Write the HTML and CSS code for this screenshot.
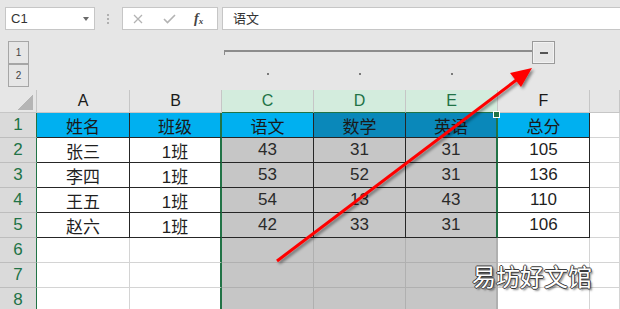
FILE: index.html
```html
<!DOCTYPE html>
<html>
	<head>
		<meta charset="UTF-8">
		<title>sheet</title>
		<link rel="stylesheet" href="styles.css">
	</head>
	<body>
		<div class="topbar">
			<div class="namebox"><span>C1</span><span class="caret"></span></div>
			<div class="grip"></div>
			<div class="fxbtns">
				<svg class="ico-x" width="10" height="10" viewBox="0 0 10 10"><path d="M1 1L9 9M9 1L1 9" stroke="#b3b3b3" stroke-width="1.3" fill="none"/></svg>
				<svg class="ico-ok" width="13" height="10" viewBox="0 0 13 10"><path d="M1 5L4.5 8.5L12 1" stroke="#b3b3b3" stroke-width="1.6" fill="none"/></svg>
				<span class="fx"><i>f</i><sub>x</sub></span>
			</div>
			<div class="formula">语文</div>
		</div>

		<div class="outline">
			<div class="levels">
				<div class="lvl">1</div>
				<div class="lvl">2</div>
			</div>
			<div class="group">
				<div class="bracket">
					<div class="line"></div>
					<div class="minus"><span></span></div>
				</div>
				<div class="dots"><i></i><i></i><i></i></div>
			</div>
		</div>

		<div class="sheet">
			<!-- 列标题 -->
			<div class="corner"></div>
			<div class="ch">A</div>
			<div class="ch">B</div>
			<div class="ch sel">C</div>
			<div class="ch sel">D</div>
			<div class="ch sel">E</div>
			<div class="ch">F</div>
			<div class="ch"></div>

			<!-- 表头 -->
			<div class="rh">1</div>
			<div class="t hd">姓名</div>
			<div class="t hd sl">班级</div>
			<div class="t hd">语文</div>
			<div class="t hd dk">数学</div>
			<div class="t hd dk sr handle">英语</div>
			<div class="t hd">总分</div>
			<div></div>

			<div class="rh">2</div>
			<div class="t">张三</div>
			<div class="t sl">1班</div>
			<div class="t g">43</div>
			<div class="t g">31</div>
			<div class="t g sr">31</div>
			<div class="t">105</div>
			<div></div>

			<div class="rh">3</div>
			<div class="t">李四</div>
			<div class="t sl">1班</div>
			<div class="t g">53</div>
			<div class="t g">52</div>
			<div class="t g sr">31</div>
			<div class="t">136</div>
			<div></div>

			<div class="rh">4</div>
			<div class="t">王五</div>
			<div class="t sl">1班</div>
			<div class="t g">54</div>
			<div class="t g">13</div>
			<div class="t g sr">43</div>
			<div class="t">110</div>
			<div></div>

			<div class="rh">5</div>
			<div class="t">赵六</div>
			<div class="t sl">1班</div>
			<div class="t g">42</div>
			<div class="t g">33</div>
			<div class="t g sr">31</div>
			<div class="t">106</div>
			<div></div>

			<div class="rh">6</div>
			<div></div>
			<div class="sl"></div>
			<div class="g e"></div>
			<div class="g e"></div>
			<div class="g e sr"></div>
			<div></div>
			<div></div>

			<div class="rh">7</div>
			<div></div>
			<div class="sl"></div>
			<div class="g e"></div>
			<div class="g e"></div>
			<div class="g e sr"></div>
			<div></div>
			<div></div>

			<div class="rh">8</div>
			<div></div>
			<div class="sl"></div>
			<div class="g e"></div>
			<div class="g e"></div>
			<div class="g e sr"></div>
			<div></div>
			<div></div>
		</div>

		<!-- 红色箭头 -->
		<svg class="arrow" width="620" height="309" viewBox="0 0 620 309">
			<defs>
				<filter id="sh" x="-10%" y="-10%" width="130%" height="130%">
					<feDropShadow dx="2" dy="2" stdDeviation="1.5" flood-color="#000" flood-opacity="0.45"/>
				</filter>
			</defs>
			<g filter="url(#sh)">
				<line x1="277" y1="261" x2="519" y2="78" stroke="#f00" stroke-width="3"/>
				<polygon points="532,68 521,87 510,73" fill="#f00"/>
			</g>
		</svg>

		<div class="watermark">易坊好文馆</div>
	</body>
</html>
```

FILE: styles.css
```css
*{
	margin: 0;
	padding: 0;
}
body{
	width: 620px;
	height: 309px;
	overflow: hidden;
	position: relative;
	background: #e6e6e6;
	font-family: "Liberation Sans", "Noto Sans CJK SC", sans-serif;
	color: #222;
}

/* 编辑栏 */
.topbar{
	display: flex;
	align-items: center;
	height: 37px;
}
.namebox{
	width: 90px;
	height: 23px;
	margin-left: 5px;
	box-sizing: border-box;
	border: 1px solid #c6c6c6;
	background: #fff;
	display: flex;
	align-items: center;
	justify-content: space-between;
	padding: 0 5px 0 5px;
	font-size: 13px;
	color: #333;
}
.caret{
	width: 0;
	height: 0;
	border-left: 3px solid transparent;
	border-right: 3px solid transparent;
	border-top: 4px solid #6a6a6a;
}
.grip{
	width: 2px;
	height: 10px;
	margin-left: 12px;
	background: repeating-linear-gradient(to bottom, #b0b0b0 0, #b0b0b0 2px, transparent 2px, transparent 4px);
}
.fxbtns{
	width: 96px;
	height: 23px;
	margin-left: 13px;
	box-sizing: border-box;
	border: 1px solid #c6c6c6;
	background: #fff;
	display: flex;
	align-items: center;
}
.ico-x{
	margin-left: 10px;
}
.ico-ok{
	margin-left: 20px;
}
.fx{
	margin-left: 18px;
	font-family: "Liberation Serif", serif;
	font-size: 14px;
	font-weight: bold;
	color: #444;
	font-style: italic;
	line-height: 1;
}
.fx sub{
	font-size: 9px;
	vertical-align: -1px;
}
.formula{
	flex: 1;
	height: 23px;
	margin-left: 4px;
	box-sizing: border-box;
	border: 1px solid #c6c6c6;
	border-right: none;
	background: #fff;
	padding-left: 10px;
	font-size: 13px;
	line-height: 21px;
	color: #333;
}

/* 分级显示 */
.outline{
	display: flex;
	height: 53px;
}
.levels{
	margin-left: 8px;
	padding-top: 4px;
}
.lvl{
	width: 21px;
	height: 23px;
	box-sizing: border-box;
	border: 1px solid #a6a6a6;
	background: #e6e6e6;
	font-size: 10px;
	color: #444;
	display: flex;
	align-items: center;
	justify-content: center;
}
.group{
	margin-left: 195px;
	padding-top: 4px;
	width: 331px;
}
.bracket{
	display: flex;
	align-items: center;
	height: 23px;
}
.line{
	flex: 1;
	height: 3px;
	border-top: 2px solid #8c8c8c;
	border-left: 1px solid #8c8c8c;
}
.minus{
	width: 23px;
	height: 23px;
	box-sizing: border-box;
	border: 1px solid #9a9a9a;
	box-shadow: inset 0 0 0 1px #f2f2f2;
	display: flex;
	align-items: center;
	justify-content: center;
}
.minus span{
	width: 8px;
	height: 2px;
	background: #555;
}
.dots{
	display: flex;
	gap: 90px;
	padding-left: 43px;
	margin-top: 9px;
}
.dots i{
	width: 2px;
	height: 2px;
	background: #7a7a7a;
}

/* 工作表 */
.sheet{
	display: grid;
	grid-template-columns: 37px 93px 92px 92px 92px 92px 92px 30px;
	grid-template-rows: 23px repeat(8, 25px);
}
.sheet > div{
	box-sizing: border-box;
	border-right: 1px solid #d4d4d4;
	border-bottom: 1px solid #d4d4d4;
	background: #fff;
	display: flex;
	align-items: center;
	justify-content: center;
	font-size: 17px;
	color: #1f1f1f;
}
.sheet > .corner{
	background: #e6e6e6 linear-gradient(to bottom right, transparent 50%, #b5b5b5 50%) no-repeat right 3px bottom 2px / 16px 15px;
	border-right-color: #c6c6c6;
	border-bottom-color: #c6c6c6;
}
.sheet > .ch{
	background: #e6e6e6;
	border-right-color: #c6c6c6;
	border-bottom-color: #c6c6c6;
	font-size: 16px;
	color: #1a1a1a;
}
.sheet > .ch.sel{
	background: #d3ecdd;
	color: #217346;
	border-bottom: 1px solid #217346;
}
.sheet > .rh{
	background: #dadada;
	color: #217346;
	border-right: 1px solid #217346;
	border-bottom-color: #bdbdbd;
	font-size: 17px;
}
.sheet > .t{
	border-right-color: #262626;
	border-bottom-color: #262626;
}
.sheet > .hd{
	background: #00b0f0;
	color: #1a1a1a;
}
.sheet > .hd.dk{
	background: #0a88ba;
}
.sheet > .g{
	background: #c6c6c6;
	color: #2a2a2a;
}
.sheet > .g.e{
	border-right-color: #b0b0b0;
	border-bottom-color: #b0b0b0;
}
.sheet > .sl,
.sheet > .sr{
	border-right: 2px solid #217346;
}
.sheet > .handle{
	position: relative;
}
.handle::after{
	content: "";
	position: absolute;
	right: -4px;
	top: -2px;
	width: 5px;
	height: 5px;
	background: #217346;
	border: 1px solid #fff;
}

/* 覆盖层 */
.arrow{
	position: absolute;
	left: 0;
	top: 0;
	pointer-events: none;
}
.watermark{
	position: absolute;
	left: 472px;
	top: 261px;
	font-family: "Noto Sans CJK SC", sans-serif;
	font-size: 24px;
	line-height: 30px;
	color: #fff;
	text-shadow: -1px 0 #3a3a3a, 1px 0 #3a3a3a, 0 -1px #3a3a3a, 0 1px #3a3a3a, 2px 2px 2px rgba(0,0,0,0.5);
}
```
